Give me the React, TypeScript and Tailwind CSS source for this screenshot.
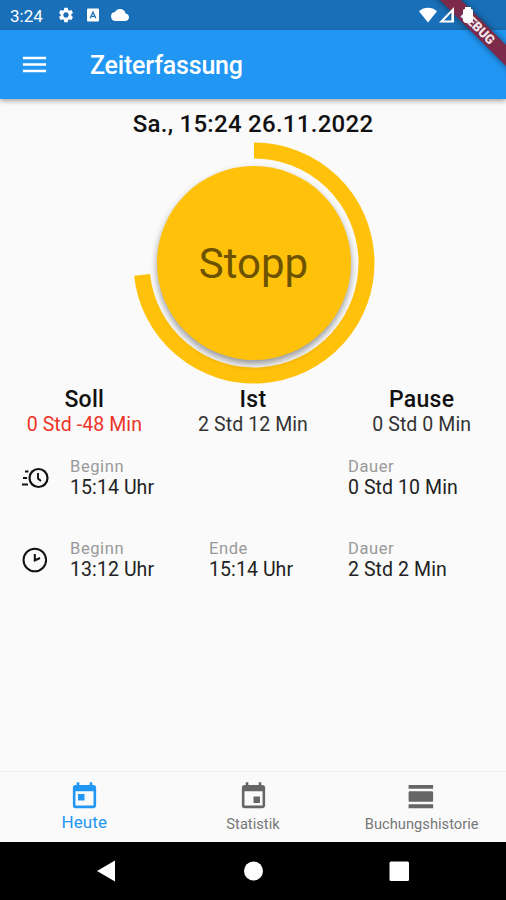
import React from 'react';
import { MdCloud, MdEvent, MdMenu, MdSettings, MdToday, MdViewDay } from 'react-icons/md';

interface Booking {
    running: boolean;
    begin: string;
    end?: string;
    duration: string;
}

const bookings: Booking[] = [
    { running: true, begin: '15:14 Uhr', duration: '0 Std 10 Min' },
    { running: false, begin: '13:12 Uhr', end: '15:14 Uhr', duration: '2 Std 2 Min' },
];

function StatusBar() {
    return (
        <div className="flex h-[30px] items-center bg-[#1a70b8] pl-[10px] text-white">
            <span className="w-[47px] pt-[2px] text-[17px] leading-none">3:24</span>
            <MdSettings size={18} />
            <svg className="ml-[12px]" width="12" height="14" viewBox="0 0 12 14">
                <rect width="12" height="13" y="0.5" rx="1" fill="white" />
                <path d="M3.2 10.2 6 4l2.8 6.2M4.3 8.3h3.4" fill="none" stroke="#1a70b8" strokeWidth="1.3" />
            </svg>
            <MdCloud className="ml-[12px]" size={18} />
            {/* the battery has to stay above the debug banner */}
            <svg className="relative z-30 mr-[28px] ml-auto" width="60" height="20" viewBox="0 0 60 20">
                <path d="M1 6.2C6 1.6 14 1.6 19 6.2L10 17.5z" fill="white" />
                <path d="M36 2v15.500H21zM33.400 7.500l-7.500 8h7.500z" fill="white" fillRule="evenodd" />
                <path d="M47 2h6v2h.5q1.500 0 1.500 1.500V15l-2 3h-6l-2-2V5.500Q45 4 46.500 4h.5z" fill="white" />
            </svg>
        </div>
    );
}

function DebugBanner() {
    return (
        <div className="pointer-events-none absolute top-0 right-0 z-20 h-[80px] w-[80px] overflow-hidden">
            <div className="absolute top-[20px] left-[-13px] flex h-[15px] w-[130px] rotate-45 items-center justify-center bg-[#7b2a49] text-[13px] font-black text-[#f4e8ec] shadow-[0_0_7px_rgba(0,0,0,0.5)]">
                DEBUG
            </div>
        </div>
    );
}

function Summary({ title, value, alert }: { title: string; value: string; alert?: boolean }) {
    return (
        <div className="flex flex-1 flex-col items-center">
            <span className="text-[23px] leading-[25px] font-medium tracking-[0.3px]">{title}</span>
            <span className={`text-[19.5px] leading-[25px] tracking-[0.08px] ${alert ? 'text-[#ee3329]' : 'text-[#333]'}`}>
                {value}
            </span>
        </div>
    );
}

function Field({ label, value }: { label: string; value: string }) {
    return (
        <div className="w-[139px]">
            <div className="text-[16.5px] leading-[20px] tracking-[0.6px] text-[#999]">{label}</div>
            <div className="text-[19.5px] leading-[22px] tracking-[0.08px] text-[#222]">{value}</div>
        </div>
    );
}

function ClockIcon({ running }: { running: boolean }) {
    if (running) {
        return (
            <svg width="30" height="30" viewBox="0 0 30 30" fill="none" stroke="#111" strokeWidth="2.2">
                <circle cx="18.5" cy="14" r="9" />
                <path d="M18 9v5.500l3 2.500M5 7.500h3.500M3 14h4M2 20.500h6" strokeWidth="1.9" />
            </svg>
        );
    }
    return (
        <svg width="30" height="30" viewBox="0 0 30 30" fill="none" stroke="#111" strokeWidth="2">
            <circle cx="14.8" cy="14" r="11.3" />
            <path d="M14.8 8v6.500l5.200-2.500" />
        </svg>
    );
}

export default function App() {
    return (
        <div className="relative flex h-[900px] w-[506px] flex-col overflow-hidden bg-[#fafafa] font-[Roboto,sans-serif] text-[#111]">
            <StatusBar />
            <header className="z-10 flex h-[69px] items-center bg-[#2196f3] pl-[19px] text-white shadow-[0_2px_5px_rgba(0,0,0,0.35)]">
                <MdMenu size={31} />
                <h1 className="ml-[40px] pt-[2px] text-[25px] leading-none font-medium tracking-[-0.2px]">Zeiterfassung</h1>
            </header>
            <DebugBanner />

            <main className="flex flex-1 flex-col">
                <div className="pt-[11px] text-center text-[24px] leading-[28px] font-medium tracking-[0.28px]">
                    Sa., 15:24 26.11.2022
                </div>
                <div className="mt-[4px] ml-[1px] grid h-[242px] place-items-center">
                    <svg className="col-start-1 row-start-1" width="242" height="242" viewBox="0 0 242 242">
                        <path d="M121 8.5A112.5 112.5 0 1 1 9.1 132.8" fill="none" stroke="#ffc10a" strokeWidth="16" />
                    </svg>
                    <button className="z-10 col-start-1 row-start-1 h-[194px] w-[194px] rounded-full bg-[#ffc10a] text-[42px] text-[#6d5200] shadow-[0_4px_7px_rgba(0,0,0,0.4)]">
                        Stopp
                    </button>
                </div>
                <div className="mt-[3px] flex">
                    <Summary title="Soll" value="0 Std -48 Min" alert />
                    <Summary title="Ist" value="2 Std 12 Min" />
                    <Summary title="Pause" value="0 Std 0 Min" />
                </div>
                <div className="mt-[20px]">
                    {bookings.map((b) => (
                        <div key={b.begin} className="flex h-[82px] items-start pl-[20px]">
                            <div className="mt-[7px] w-[50px]">
                                <ClockIcon running={b.running} />
                            </div>
                            <Field label="Beginn" value={b.begin} />
                            {b.end ? <Field label="Ende" value={b.end} /> : <div className="w-[139px]" />}
                            <Field label="Dauer" value={b.duration} />
                        </div>
                    ))}
                </div>
            </main>

            <nav className="flex h-[71px] border-t border-[#eee] text-[#666]">
                <div className="flex flex-1 flex-col items-center pt-[9px] text-[#2196f3]">
                    <MdToday size={31} />
                    <span className="text-[17px] leading-[20px] tracking-[0.1px]">Heute</span>
                </div>
                <div className="flex flex-1 flex-col items-center pt-[9px]">
                    <MdEvent size={31} />
                    <span className="pt-[2px] text-[14.7px] leading-[20px] text-[#777]">Statistik</span>
                </div>
                <div className="flex flex-1 flex-col items-center pt-[9px]">
                    <MdViewDay size={31} />
                    <span className="pt-[2px] text-[14.7px] leading-[20px] text-[#777]">Buchungshistorie</span>
                </div>
            </nav>
            <div className="flex h-[58px] items-center bg-black">
                <svg width="506" height="58" viewBox="0 0 506 58" fill="white">
                    <path d="M97 29l18-10.5v21z" />
                    <circle cx="253.5" cy="29" r="9.5" />
                    <rect x="389.5" y="19.5" width="19.5" height="19.5" rx="1.5" />
                </svg>
            </div>
        </div>
    );
}
